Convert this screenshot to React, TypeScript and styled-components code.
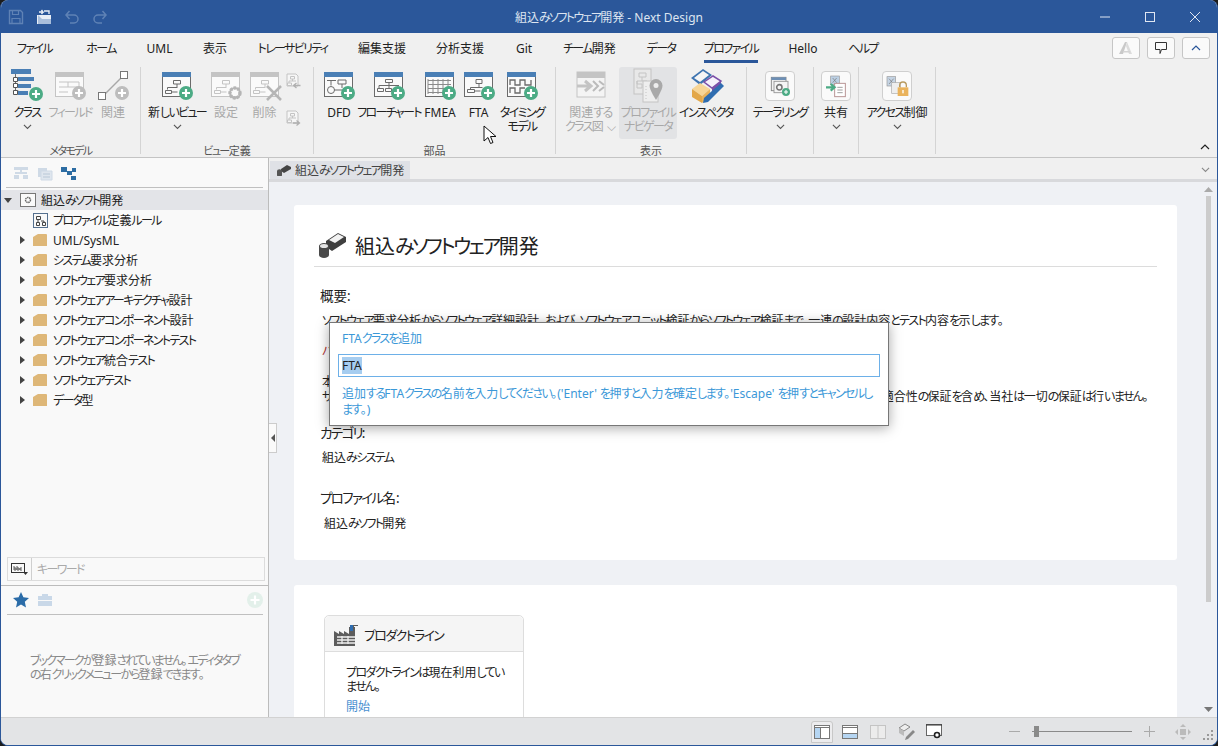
import React from "react";
import styled, { createGlobalStyle } from "styled-components";

const FONT = `"Noto Sans", "Noto Sans CJK JP", sans-serif`;
const GREEN = "#4cab85";
const OFF = "#c4c4c4";

const Global = createGlobalStyle`
  html, body { margin: 0; padding: 0; height: 100%; background: #1c1c1c; overflow: hidden; }
  #root { height: 100%; }
  * { box-sizing: border-box; }
  body { font-family: ${FONT}; font-feature-settings: "palt"; font-size: 12px; color: #222; }
`;

const TABS = [
  { title: "ファイル", width: 67 },
  { title: "ホーム", width: 66 },
  { title: "UML", width: 51 },
  { title: "表示", width: 60 },
  { title: "トレーサビリティ", width: 95 },
  { title: "編集支援", width: 84 },
  { title: "分析支援", width: 72 },
  { title: "Git", width: 56 },
  { title: "チーム開発", width: 75 },
  { title: "データ", width: 68 },
  { title: "プロファイル", width: 72, active: true },
  { title: "Hello", width: 72 },
  { title: "ヘルプ", width: 48 },
];

const FOLDERS = [
  "UML/SysML",
  "システム要求分析",
  "ソフトウェア要求分析",
  "ソフトウェアアーキテクチャ設計",
  "ソフトウェアコンポーネント設計",
  "ソフトウェアコンポーネントテスト",
  "ソフトウェア統合テスト",
  "ソフトウェアテスト",
  "データ型",
];

// the reference font has narrow kana, so kana runs get tighter tracking
const Jp = ({ children }: { children: string }) => (
  <>
    {children.split(/([\u3040-\u30ff]+)/).map((part, i) =>
      i % 2 ? <KanaRun key={i}>{part}</KanaRun> : part
    )}
  </>
);

/* ---------- icons ---------- */

const Plus = ({ off, cx = 27, cy = 26, r = 7 }: any) => (
  <g>
    <circle cx={cx} cy={cy} r={r} fill={off ? "#bdbdbd" : GREEN} />
    <path d={`M${cx - 4} ${cy}h8M${cx} ${cy - 4}v8`} stroke="#fff" strokeWidth="2.2" />
  </g>
);

const Frame = ({ off }: any) => (
  <g>
    <rect x="3.5" y="5.5" width="28" height="24" fill="#fafafa" stroke={off ? OFF : "#6b6b6b"} />
    <rect x="3" y="5" width="29" height="5" fill={off ? OFF : "#4a7fb5"} />
  </g>
);

const Ico = ({ children, size = 36 }: any) => (
  <svg width={size} height={size} viewBox="0 0 36 36" fill="none">
    {children}
  </svg>
);

const TreeLines = ({ c = "#6b6b6b" }: any) => (
  <path
    d="M14.5 13.5h7v3.5h-7zM18 17v3M8.5 20.5h10M8.5 20.5v2M6.5 23.5h6v3h-6zM12.5 25h6"
    stroke={c}
    fill="none"
  />
);

const ClassIcon = () => (
  <Ico>
    <rect x="2" y="2" width="20" height="5" fill="#4a7fb5" />
    <path d="M6.5 7v17M6.5 12h3M6.5 18h3M6.5 24h3" stroke="#6b6b6b" />
    <path d="M4.5 10.5h4v4h-4zM4.5 16.5h4v4h-4zM4.5 23.5h4v4h-4z" fill="#fff" stroke="#555" />
    <rect x="9" y="10" width="16" height="4" fill="#4a7fb5" />
    <rect x="9" y="17" width="13" height="4" fill="#4a7fb5" />
    <rect x="9" y="24" width="10" height="4" fill="#4a7fb5" />
    <Plus cx={27} cy={27} />
  </Ico>
);

const FieldIcon = () => (
  <Ico>
    <Frame off />
    <path d="M7 15h9M7 20h9M7 25h9M16 15h11v5H16z" stroke={OFF} />
    <Plus off />
  </Ico>
);

const RelationIcon = () => (
  <Ico>
    <path d="M8 29L29 8" stroke="#a8a8a8" strokeWidth="1.4" />
    <rect x="3.5" y="25.5" width="7" height="7" fill="#fff" stroke="#777" />
    <rect x="25.5" y="4.5" width="7" height="7" fill="#fff" stroke="#777" />
    <Plus off />
  </Ico>
);

const NewViewIcon = () => (
  <Ico>
    <Frame />
    <TreeLines />
    <Plus />
  </Ico>
);

const GearViewIcon = () => (
  <Ico>
    <Frame off />
    <TreeLines c={OFF} />
    <circle cx="27" cy="26" r="5" stroke="#b5b5b5" strokeWidth="3.4" strokeDasharray="2.4 1.2" />
    <circle cx="27" cy="26" r="5" stroke="#b5b5b5" strokeWidth="2" />
  </Ico>
);

const DeleteViewIcon = () => (
  <Ico>
    <Frame off />
    <TreeLines c={OFF} />
    <path d="M20 19l14 14M34 19L20 33" stroke="#b5b5b5" strokeWidth="2.6" />
  </Ico>
);

const SmallDiagram = ({ down }: any) => (
  <Ico size={18}>
    <path d="M6 4h18l4 4v20H6z" fill="#f6f6f6" stroke={OFF} strokeWidth="2" />
    <path d="M13 9h8v5h-8zM17 14v4M10 18h14M10 18v4M7 22h8v5H7z" stroke={OFF} strokeWidth="2" />
    <path
      d={down ? "M18 28h12M25 23l6 5-6 5" : "M33 27H20M25 22l-6 5 6 5"}
      stroke="#b0b0b0"
      strokeWidth="2.6"
    />
  </Ico>
);

const DfdIcon = () => (
  <Ico>
    <Frame />
    <path d="M6 13.5h9M10 13.5v5M17 13h8v4h-8zM21 17v4M13 23h8" stroke="#6b6b6b" />
    <circle cx="10" cy="23" r="3.5" fill="#fafafa" stroke="#6b6b6b" />
    <Plus />
  </Ico>
);

const FlowIcon = () => (
  <Ico>
    <Frame />
    <path
      d="M14.5 12.5h7v3h-7zM18 15.5v3M8 18.5h20M8 18.5v3M18 18.5v3M6.5 21.5h6v3h-6zM14.5 21.5h6v3h-6z"
      stroke="#6b6b6b"
    />
    <Plus />
  </Ico>
);

const FmeaIcon = () => (
  <Ico>
    <Frame />
    <path
      d="M6 13.5h23M6 17.5h23M6 21.5h23M6 25.5h19M6 12v15M11 12v15M16 12v15M21 12v15M26 12v8"
      stroke="#8a8a8a"
    />
    <Plus />
  </Ico>
);

const FtaIcon = () => (
  <Ico>
    <Frame />
    <path
      d="M15 12.5h6v4h-6zM18 16.5v4M9.5 20.5h12M9.5 20.5v2M6.5 22.5h7v3h-7zM13.5 24h6"
      stroke="#6b6b6b"
    />
    <Plus />
  </Ico>
);

const TimingIcon = () => (
  <Ico>
    <Frame />
    <path
      d="M6 18v-5h5v5h5v-5h5v5h6v-5M6 26v-5h5v5h5v-5h5"
      stroke="#6b6b6b"
      strokeWidth="1.3"
    />
    <Plus />
  </Ico>
);

const RelatedDiagramIcon = () => (
  <Ico>
    <rect x="4" y="5" width="28" height="25" fill="#f4f4f4" stroke={OFF} />
    <rect x="4" y="5" width="28" height="6" fill={OFF} />
    <path d="M4 19h12M12 14l6 5-6 5" stroke={OFF} strokeWidth="3" />
    <path d="M20 14l5 5-5 5M26 14l5 4M26 24l5-4" stroke="#bbb" strokeWidth="2" />
  </Ico>
);

const NavigatorIcon = () => (
  <Ico>
    <rect x="4" y="2" width="17" height="25" fill="#e8e8e8" stroke={OFF} />
    <path d="M9 6h7v4H9zM12 10v4M7 14h10M7 14v3h5v4H7z" stroke={OFF} />
    <rect x="13" y="14" width="15" height="21" fill="#eee" stroke={OFF} />
    <path d="M16 19v14" stroke={OFF} strokeDasharray="1 2" />
    <path d="M26 12a6.5 6.5 0 0 1 6.5 6.5C32.5 23 26 33 26 33s-6.5-10-6.5-14.5A6.5 6.5 0 0 1 26 12z" fill="#a9a9a9" />
    <circle cx="26" cy="18.5" r="2.5" fill="#eee" />
  </Ico>
);

const InspectorIcon = () => (
  <svg width="36" height="36" viewBox="0 0 36 36">
    <path d="M3 11L15 2l9 6-12 10z" fill="#3e74b0" />
    <path d="M6 11l9-7 6 4-9 7z" fill="#f5f5f5" />
    <path d="M16 15l9-6 8 5-9 7z" fill="#f5f1fb" stroke="#7a4fa8" strokeWidth="1.5" />
    <path d="M24 21l9-7v7l-9 6z" fill="#7a4fa8" />
    <path d="M4 22l8-6 10 6-8 7z" fill="#f7d596" />
    <path d="M4 22v8l10 6v-7z" fill="#e3a748" />
    <path d="M14 29l8-7v8l-8 6z" fill="#eab35c" />
    <path d="M33 16l3 3-16 16-5 1 1-5z" fill="#2f6db0" />
  </svg>
);

const TailorIcon = () => (
  <Ico size={24}>
    <rect x="5" y="5" width="22" height="20" fill="#f2f2f2" stroke="#888" strokeWidth="1.4" />
    <rect x="5" y="5" width="22" height="4" fill="#6d8fb5" />
    <rect x="9" y="11" width="21" height="17" fill="#f5f5f5" stroke="#999" strokeWidth="1.4" />
    <circle cx="17" cy="20" r="4" stroke="#777" strokeWidth="2.4" />
    <circle cx="27" cy="27" r="6" fill={GREEN} />
    <path d="M24 27h6M27 24v6" stroke="#fff" strokeWidth="1.6" />
  </Ico>
);

const ShareIcon = () => (
  <Ico size={24}>
    <rect x="10" y="3" width="13" height="13" fill="#bcd0e4" stroke="#999" />
    <path d="M13 6l6 7M19 6l-6 7" stroke="#777" />
    <rect x="16" y="14" width="16" height="20" fill="#fff" stroke="#b58f8f" strokeWidth="1.4" />
    <path d="M20 20h8M20 24h8M20 28h8" stroke="#999" strokeWidth="1.4" />
    <path d="M3 20h11M10 15l6 5-6 5" stroke={GREEN} strokeWidth="3.2" fill="none" />
  </Ico>
);

const AccessIcon = () => (
  <Ico size={24}>
    <rect x="3" y="4" width="13" height="14" fill="#c5d4e4" stroke="#999" />
    <path d="M6 7l7 8M13 7l-7 8" stroke="#777" />
    <rect x="10" y="13" width="13" height="16" fill="#eee" stroke="#aaa" />
    <path d="M22 20v-3a5 5 0 0 1 10 0v3" stroke="#b99a5f" strokeWidth="2" fill="none" />
    <rect x="19" y="20" width="16" height="13" fill="#eab35c" />
    <rect x="26" y="24" width="2" height="5" fill="#fff" />
  </Ico>
);

const Chevron = ({ c = "#555", size = 9 }: any) => (
  <svg width={size} height={size * 0.6} viewBox="0 0 10 6" fill="none">
    <path d="M1 1l4 4 4-4" stroke={c} strokeWidth="1.2" />
  </svg>
);

/* ---------- ribbon data ---------- */

const GROUPS: any[] = [
  {
    label: "メタモデル",
    width: 140,
    pad: 5,
    items: [
      { w: 42, icon: <ClassIcon />, label: "クラス", more: true },
      { w: 44, icon: <FieldIcon />, label: "フィールド", off: true },
      { w: 42, icon: <RelationIcon />, label: "関連", off: true },
    ],
  },
  {
    label: "ビュー定義",
    width: 173,
    pad: 7,
    items: [
      { w: 58, icon: <NewViewIcon />, label: "新しいビュー", more: true },
      { w: 40, icon: <GearViewIcon />, label: "設定", off: true },
      { w: 37, icon: <DeleteViewIcon />, label: "削除", off: true },
    ],
    small: true,
  },
  {
    label: "部品",
    width: 242,
    pad: 5,
    items: [
      { w: 40, icon: <DfdIcon />, label: "DFD" },
      { w: 60, icon: <FlowIcon />, label: "フローチャート" },
      { w: 42, icon: <FmeaIcon />, label: "FMEA" },
      { w: 35, icon: <FtaIcon />, label: "FTA" },
      { w: 52, icon: <TimingIcon />, label: "タイミング\nモデル" },
    ],
  },
  {
    label: "表示",
    width: 191,
    pad: 6,
    items: [
      { w: 57, icon: <RelatedDiagramIcon />, label: "関連する\nクラス図 ⌵", off: true },
      { w: 58, icon: <NavigatorIcon />, label: "プロファイル\nナビゲータ", off: true, pressed: true },
      { w: 58, icon: <InspectorIcon />, label: "インスペクタ" },
    ],
  },
  { width: 67, pad: 0, items: [{ w: 67, icon: <TailorIcon />, label: "テーラリング", more: true, boxed: true }] },
  { width: 45, pad: 0, items: [{ w: 45, icon: <ShareIcon />, label: "共有", more: true, boxed: true }] },
  { width: 77, pad: 0, items: [{ w: 77, icon: <AccessIcon />, label: "アクセス制御", more: true, boxed: true }] },
];

/* ---------- app ---------- */

export default function App() {
  return (
    <>
      <Global />
      <Win>
        <TitleBar>
          <QuickAccess>
            <QuickSlot>
              <svg width="16" height="16" viewBox="0 0 16 16" fill="none">
                <path d="M1.5 1.5h11l2 2v11h-13z" stroke="#5f82b5" strokeWidth="1.4" />
                <path d="M4.5 1.5v4h6v-4M4 14.5v-5h8v5" stroke="#5f82b5" strokeWidth="1.2" />
              </svg>
            </QuickSlot>
            <QuickSlot>
              <svg width="16" height="16" viewBox="0 0 16 16">
                <path d="M1 6h14v9H1z" fill="#e9eef6" />
                <path d="M2 6l4 4h9v5H2z" fill="#a9bedb" />
                <path d="M3 3h4l-1.5-2M7 3L5.5 5M8 2h5v3" stroke="#e9eef6" strokeWidth="1.4" fill="none" />
              </svg>
            </QuickSlot>
            <QuickSlot>
              <svg width="16" height="16" viewBox="0 0 16 16" fill="none">
                <path d="M2 6h8a4 4 0 0 1 0 8H6M5.5 2L2 6l3.5 4" stroke="#5f82b5" strokeWidth="1.5" />
              </svg>
            </QuickSlot>
            <QuickSlot>
              <svg width="16" height="16" viewBox="0 0 16 16" fill="none">
                <path d="M14 6H6a4 4 0 0 0 0 8h4M10.5 2L14 6l-3.5 4" stroke="#5f82b5" strokeWidth="1.5" />
              </svg>
            </QuickSlot>
          </QuickAccess>
          <WinTitle>
            <Jp>組込みソフトウェア開発 - Next Design</Jp>
          </WinTitle>
          <WinControls>
            <WinButton>
              <svg width="12" height="12" viewBox="0 0 12 12"><path d="M1 6h10" stroke="#dfe6f2" /></svg>
            </WinButton>
            <WinButton>
              <svg width="12" height="12" viewBox="0 0 12 12"><rect x="1.5" y="1.5" width="9" height="9" fill="none" stroke="#dfe6f2" /></svg>
            </WinButton>
            <WinButton>
              <svg width="12" height="12" viewBox="0 0 12 12"><path d="M1 1l10 10M11 1L1 11" stroke="#dfe6f2" /></svg>
            </WinButton>
          </WinControls>
        </TitleBar>

        <TabRow>
          <TabList>
            {TABS.map((t) => (
              <Tab key={t.title} $width={t.width}>
                <TabText $active={t.active}>
                  <Jp>{t.title}</Jp>
                </TabText>
              </Tab>
            ))}
          </TabList>
          <TopButtons>
            <TopButton>
              <svg width="16" height="14" viewBox="0 0 16 14">
                <path d="M1 13L7 1h2L5 13z" fill="#c9c9c9" />
                <path d="M9 1l5 12h-3L8 5z" fill="#dcdcdc" />
                <path d="M5 10h7v1.5H5z" fill="#d4d4d4" />
              </svg>
            </TopButton>
            <TopButton>
              <svg width="14" height="14" viewBox="0 0 14 14" fill="none">
                <path d="M1.5 1.5h11v7h-5l-1.5 4v-4h-4.5z" stroke="#333" />
              </svg>
            </TopButton>
            <TopButton>
              <svg width="10" height="6" viewBox="0 0 10 6" fill="none"><path d="M1 5l4-4 4 4" stroke="#2b579a" strokeWidth="1.2" /></svg>
            </TopButton>
          </TopButtons>
        </TabRow>

        <Ribbon>
          {GROUPS.map((g, i) => (
            <Group key={i} $width={g.width}>
              <GroupItems $pad={g.pad} $center={g.items[0].boxed}>
                {g.items.map((it: any) => (
                  <RibbonButton key={it.label} $width={it.w} $pressed={it.pressed} $off={it.off}>
                    {it.boxed ? (
                      <BoxedIcon>{it.icon}</BoxedIcon>
                    ) : (
                      <IconSlot>{it.icon}</IconSlot>
                    )}
                    <RibbonLabel>
                      <Jp>{it.label}</Jp>
                    </RibbonLabel>
                    {it.more && (
                      <MoreMark>
                        <Chevron />
                      </MoreMark>
                    )}
                  </RibbonButton>
                ))}
                {g.small && (
                  <SmallColumn>
                    <SmallDiagram />
                    <SmallDiagram down />
                  </SmallColumn>
                )}
              </GroupItems>
              {g.label && (
                <GroupLabel>
                  <Jp>{g.label}</Jp>
                </GroupLabel>
              )}
            </Group>
          ))}
          <CollapseRibbon>
            <svg width="10" height="6" viewBox="0 0 10 6" fill="none"><path d="M1 5l4-4 4 4" stroke="#222" strokeWidth="1.2" /></svg>
          </CollapseRibbon>
        </Ribbon>

        <Workspace>
          <Sidebar>
            <SideToolbar>
              <svg width="16" height="14" viewBox="0 0 16 14" fill="#cfdae6">
                <path d="M1 1h14v3H1zM7 4h2v3H7zM2 6h12v2H2zM1 9h5v4H1zM10 9h5v4h-5z" />
              </svg>
              <svg width="16" height="16" viewBox="0 0 16 16">
                <path d="M1 3h9v9H1z" fill="#cfdae6" />
                <path d="M4 6h11v9H4z" fill="#dfe6ee" stroke="#cfdae6" />
                <path d="M6 9h7M6 12h7" stroke="#b8c7d6" />
              </svg>
              <svg width="16" height="16" viewBox="0 0 16 16" fill="#2d6da3">
                <rect x="0" y="2" width="6" height="5" />
                <rect x="6" y="6" width="5" height="4" />
                <rect x="11" y="3" width="4" height="4" />
                <rect x="10" y="11" width="5" height="4" />
              </svg>
            </SideToolbar>
            <Tree>
              <TreeRow $root $selected>
                <Arrow>
                  <svg width="8" height="5" viewBox="0 0 8 5"><path d="M0 0h8L4 5z" fill="#444" /></svg>
                </Arrow>
                <TreeIcon $root>
                  <svg width="16" height="14" viewBox="0 0 16 14" fill="none">
                    <rect x="0.5" y="0.5" width="15" height="13" fill="#fafafa" stroke="#777" />
                    <circle cx="8" cy="7" r="2.5" stroke="#666" strokeWidth="1.4" strokeDasharray="1.5 .6" />
                  </svg>
                </TreeIcon>
                <Jp>組込みソフト開発</Jp>
              </TreeRow>
              <TreeRow>
                <Arrow />
                <TreeIcon>
                  <svg width="15" height="15" viewBox="0 0 15 15" fill="none">
                    <rect x="0.5" y="0.5" width="14" height="14" stroke="#55708f" />
                    <path d="M3.5 3.5h4v3h-4zM3.5 9.5h3v3h-3zM9.5 9.5h3v3h-3zM5 6.5v3M8 8h3v1.5" stroke="#444" />
                  </svg>
                </TreeIcon>
                <Jp>プロファイル定義ルール</Jp>
              </TreeRow>
              {FOLDERS.map((f) => (
                <TreeRow key={f}>
                  <Arrow>
                    <svg width="5" height="8" viewBox="0 0 5 8"><path d="M0 0v8l5-4z" fill="#444" /></svg>
                  </Arrow>
                  <TreeIcon>
                    <svg width="14" height="12" viewBox="0 0 14 12">
                      <path d="M0 3l5-3h8a1 1 0 0 1 1 1v11H0z" fill="#deb778" />
                    </svg>
                  </TreeIcon>
                  <Jp>{f}</Jp>
                </TreeRow>
              ))}
            </Tree>
            <SearchBox>
              <SearchIcon>
                <svg width="17" height="12" viewBox="0 0 17 12" fill="none">
                  <rect x="0.5" y="0.5" width="13" height="9" stroke="#333" />
                  <path d="M3 3v4h2V5H3M6 3v4h2V5H6M11 5H9v2h2" stroke="#333" strokeWidth=".8" />
                  <path d="M12 9h5l-2.5 3z" fill="#333" />
                </svg>
              </SearchIcon>
              <SearchHint>
                <Jp>キーワード</Jp>
              </SearchHint>
            </SearchBox>
            <BookmarkPane>
              <BookmarkBar>
                <svg width="16" height="16" viewBox="0 0 16 16">
                  <path d="M8 0l2.4 5.3 5.6.6-4.2 3.8 1.2 5.8L8 12.6 3 15.5l1.2-5.8L0 5.9l5.6-.6z" fill="#2b6ca8" />
                </svg>
                <svg width="14" height="14" viewBox="0 0 14 14">
                  <path d="M4 3V1h6v2h4v4H0V3zM0 8h14v5H0z" fill="#c9d8e8" />
                </svg>
                <BookmarkAdd>
                  <svg width="16" height="16" viewBox="0 0 16 16">
                    <circle cx="8" cy="8" r="8" fill="#e3f0ea" />
                    <path d="M3.5 8h9M8 3.5v9" stroke="#fff" strokeWidth="2.2" />
                  </svg>
                </BookmarkAdd>
              </BookmarkBar>
              <BookmarkMessage>
                <Jp>ブックマークが登録されていません。エディタタブ</Jp>
                <br />
                <Jp>の右クリックメニューから登録できます。</Jp>
              </BookmarkMessage>
            </BookmarkPane>
          </Sidebar>

          <Main>
            <CollapseHandle>
              <svg width="4" height="8" viewBox="0 0 4 8"><path d="M4 0v8L0 4z" fill="#555" /></svg>
            </CollapseHandle>
            <DocTabBar>
              <DocTab>
                <svg width="14" height="12" viewBox="0 0 14 12">
                  <path d="M4 5l6-4 4 2v2l-7 4-3-2z" fill="#444" />
                  <path d="M0 7a2 1.5 0 0 1 5 0v4a2 1.5 0 0 1-5 0z" fill="#555" />
                </svg>
                <span>
                  <Jp>組込みソフトウェア開発</Jp>
                </span>
              </DocTab>
              <DocTabMenu>
                <Chevron c="#888" />
              </DocTabMenu>
            </DocTabBar>
            <Scroller>
              <Pages>
                <Card $height={355}>
                  <TitleRow>
                    <svg width="27" height="26" viewBox="0 0 27 26">
                      <path d="M7 9l12-8 8 4v5L13 19l-6-4z" fill="#3f3f3f" />
                      <path d="M10 8l9-6 6 3-9 6z" fill="#f2f2f2" />
                      <path d="M0 14a5 3 0 0 1 10 0v9a5 3 0 0 1-10 0z" fill="#4a4a4a" />
                      <ellipse cx="5" cy="14" rx="4" ry="2" fill="#e6e6e6" />
                    </svg>
                    <h1>
                      <Jp>組込みソフトウェア開発</Jp>
                    </h1>
                  </TitleRow>
                  <FieldName>概要:</FieldName>
                  <FieldText $top={7}>
                    <Jp>ソフトウェア要求分析からソフトウェア詳細設計、および、ソフトウェアユニット検証からソフトウェア検証まで、一連の設計内容とテスト内容を示します。</Jp>
                  </FieldText>
                  <Warning>
                    <Jp>バージョン</Jp>
                  </Warning>
                  <Notice>
                    <Jp>本プロファイルはサンプルです。</Jp>
                    <br />
                    <Jp>サンプルの内容について、その正確性、完全性、妥当性、信頼性、有用性、最新性、安全性、および特定の利用目的への適合性の保証を含め、当社は一切の保証は行いません。</Jp>
                  </Notice>
                  <FieldName $top={19}>
                    <Jp>カテゴリ:</Jp>
                  </FieldName>
                  <FieldText $top={7}>
                    <Jp>組込みシステム</Jp>
                  </FieldText>
                  <FieldName $top={22}>
                    <Jp>プロファイル名:</Jp>
                  </FieldName>
                  <FieldText $top={8} $indent={2}>
                    <Jp>組込みソフト開発</Jp>
                  </FieldText>
                </Card>
                <Card $height={200} $wide>
                  <LineCard>
                    <LineHead>
                      <svg width="24" height="24" viewBox="0 0 24 24">
                        <path d="M0 24V9l5 3V9l5 3V9l5 3V5h3v-2h6v1h-4v1h1v19z" fill="#5c5c5c" />
                        <rect x="16" y="3" width="3" height="6" fill="#2f6db0" />
                        <path d="M3 15h18M3 18h18M3 21h18M8 14v8M14 14v8" stroke="#eee" strokeWidth="1.3" />
                      </svg>
                      <LineHeadText>
                        <Jp>プロダクトライン</Jp>
                      </LineHeadText>
                    </LineHead>
                    <LineBody>
                      <Jp>プロダクトラインは現在利用してい</Jp>
                      <br />
                      <Jp>ません。</Jp>
                      <StartLink>開始</StartLink>
                    </LineBody>
                  </LineCard>
                </Card>
              </Pages>
              <ScrollTrack>
                <svg width="9" height="5" viewBox="0 0 9 5"><path d="M4.5 0L9 5H0z" fill="#aaa" /></svg>
                <ScrollThumb />
                <ScrollEnd>
                  <svg width="9" height="5" viewBox="0 0 9 5"><path d="M0 0h9L4.5 5z" fill="#777" /></svg>
                </ScrollEnd>
              </ScrollTrack>
            </Scroller>
          </Main>
        </Workspace>

        <StatusBar>
          <StatusIcon $on>
            <svg width="16" height="14" viewBox="0 0 16 14">
              <rect x="0.5" y="0.5" width="15" height="13" fill="#fff" stroke="#777" />
              <rect x="1" y="3" width="5" height="10" fill="#b5d5f2" />
              <path d="M0 2.5h16M6.5 3v10" stroke="#777" />
            </svg>
          </StatusIcon>
          <StatusIcon>
            <svg width="16" height="14" viewBox="0 0 16 14">
              <rect x="0.5" y="0.5" width="15" height="13" fill="#fff" stroke="#777" />
              <rect x="1" y="9" width="14" height="4" fill="#b5d5f2" />
              <path d="M0 2.5h16M0 8.5h16" stroke="#777" />
            </svg>
          </StatusIcon>
          <StatusIcon>
            <svg width="16" height="14" viewBox="0 0 16 14" fill="none">
              <rect x="0.5" y="0.5" width="15" height="13" stroke="#c4c4c4" fill="#ececec" />
              <path d="M8 0v14" stroke="#c4c4c4" />
            </svg>
          </StatusIcon>
          <StatusIcon>
            <svg width="17" height="17" viewBox="0 0 17 17">
              <path d="M1 5l6-4 5 3-6 4z" fill="#eee" stroke="#888" />
              <path d="M1 5v5l5 3V8z" fill="#bbb" />
              <path d="M15 7l2 2-7 7-3 1 1-3z" fill="#888" />
            </svg>
          </StatusIcon>
          <StatusIcon>
            <svg width="16" height="15" viewBox="0 0 16 15">
              <rect x="0.5" y="0.5" width="15" height="11" fill="#fff" stroke="#666" />
              <path d="M0 1h16" stroke="#333" />
              <circle cx="11" cy="11" r="2.5" fill="#fff" stroke="#222" strokeWidth="1.6" />
            </svg>
          </StatusIcon>
          <ZoomGroup>
            <ZoomSign>
              <svg width="11" height="11" viewBox="0 0 11 11"><path d="M0 5.5h11" stroke="#aaa" /></svg>
            </ZoomSign>
            <Slider>
              <SliderThumb />
            </Slider>
            <ZoomSign>
              <svg width="11" height="11" viewBox="0 0 11 11"><path d="M0 5.5h11M5.5 0v11" stroke="#aaa" /></svg>
            </ZoomSign>
            <FitIcon>
              <svg width="16" height="16" viewBox="0 0 16 16" fill="#bbb">
                <path d="M8 0l3 3H5zM8 16l-3-3h6zM0 8l3-3v6zM16 8l-3 3V5z" />
                <rect x="5" y="5" width="6" height="6" />
              </svg>
            </FitIcon>
            <Grip>
              <svg width="10" height="10" viewBox="0 0 10 10" fill="#999">
                <rect x="8" y="0" width="2" height="2" />
                <rect x="4" y="4" width="2" height="2" />
                <rect x="8" y="4" width="2" height="2" />
                <rect x="0" y="8" width="2" height="2" />
                <rect x="4" y="8" width="2" height="2" />
                <rect x="8" y="8" width="2" height="2" />
              </svg>
            </Grip>
          </ZoomGroup>
        </StatusBar>

        <InputDialog>
          <DialogTitle>
            <Jp>FTAクラスを追加</Jp>
          </DialogTitle>
          <DialogInput>
            <Selected>FTA</Selected>
          </DialogInput>
          <DialogHelp>
            <Jp>追加するFTAクラスの名前を入力してください。('Enter' を押すと入力を確定します。'Escape' を押すとキャンセルし</Jp>
            <br />
            <Jp>ます。)</Jp>
          </DialogHelp>
        </InputDialog>

        <Pointer>
          <svg width="14" height="20" viewBox="0 0 14 20">
            <path d="M1 1v15l4-3.5 2.5 6 2.5-1-2.5-6H13z" fill="#fff" stroke="#111" />
          </svg>
        </Pointer>
      </Win>
    </>
  );
}

/* ---------- styles ---------- */

const KanaRun = styled.span`
  letter-spacing: -1.65px;
`;

const Win = styled.div`
  position: relative;
  width: 1218px;
  height: 746px;
  display: flex;
  flex-direction: column;
  background: #f0f0f0;
  border: 1px solid #2b579a;
  border-top: none;
  border-radius: 8px;
  overflow: hidden;
`;

const TitleBar = styled.div`
  position: relative;
  height: 33px;
  flex: none;
  margin: 0 -1px;
  background: #2b579a;
  display: flex;
  align-items: center;
  justify-content: space-between;
`;

const QuickAccess = styled.div`
  display: flex;
  padding-left: 2px;
`;

const QuickSlot = styled.div`
  width: 28px;
  height: 33px;
  display: flex;
  align-items: center;
  justify-content: center;
`;

const WinTitle = styled.div`
  position: absolute;
  left: 0;
  right: 0;
  text-align: center;
  color: #dde5f1;
  font-size: 12px;
`;

const WinControls = styled.div`
  display: flex;
  padding-right: 1px;
`;

const WinButton = styled.div`
  width: 45px;
  height: 33px;
  display: flex;
  align-items: center;
  justify-content: center;
`;

const TabRow = styled.div`
  height: 30px;
  flex: none;
  display: flex;
  justify-content: space-between;
`;

const TabList = styled.div`
  display: flex;
`;

const Tab = styled.div<{ $width: number }>`
  width: ${(p) => p.$width}px;
  display: flex;
  justify-content: center;
  white-space: nowrap;
`;

const TabText = styled.span<{ $active?: boolean }>`
  display: flex;
  align-items: center;
  height: 30px;
  color: #222;
  border-bottom: 3px solid ${(p) => (p.$active ? "#2b579a" : "transparent")};
  padding-top: 3px;
`;

const TopButtons = styled.div`
  display: flex;
  gap: 7px;
  padding: 4px 7px 0 0;
`;

const TopButton = styled.div`
  width: 28px;
  height: 22px;
  background: #fafafa;
  border: 1px solid #c6c6c6;
  border-radius: 3px;
  display: flex;
  align-items: center;
  justify-content: center;
`;

const Ribbon = styled.div`
  position: relative;
  height: 95px;
  flex: none;
  display: flex;
  padding: 4px 0 3px 0;
  border-bottom: 1px solid #c4c4c4;
`;

const Group = styled.div<{ $width: number }>`
  position: relative;
  width: ${(p) => p.$width}px;
  flex: none;
  border-right: 1px solid #d4d4d4;
`;

const GroupItems = styled.div<{ $pad: number; $center?: boolean }>`
  display: flex;
  padding-left: ${(p) => p.$pad}px;
  justify-content: ${(p) => (p.$center ? "center" : "flex-start")};
`;

const RibbonButton = styled.div<{ $width: number; $pressed?: boolean; $off?: boolean }>`
  width: ${(p) => p.$width}px;
  height: 72px;
  flex: none;
  display: flex;
  flex-direction: column;
  align-items: center;
  background: ${(p) => (p.$pressed ? "#e2e3e5" : "transparent")};
  border-radius: 3px;
  color: ${(p) => (p.$off ? "#a8a8a8" : "#222")};
`;

const IconSlot = styled.div`
  height: 36px;
  flex: none;
`;

const BoxedIcon = styled.div`
  width: 30px;
  height: 30px;
  margin: 4px 0 2px;
  flex: none;
  background: #fafafa;
  border: 1px solid #cfcfcf;
  border-radius: 4px;
  display: flex;
  align-items: center;
  justify-content: center;
`;

const RibbonLabel = styled.div`
  margin-top: 3px;
  text-align: center;
  line-height: 14px;
  white-space: pre;
`;

const MoreMark = styled.div`
  height: 14px;
  display: flex;
  align-items: center;
`;

const SmallColumn = styled.div`
  width: 20px;
  display: flex;
  flex-direction: column;
  align-items: center;
  gap: 19px;
  padding-top: 5px;
`;

const GroupLabel = styled.div`
  position: absolute;
  left: 0;
  right: 0;
  bottom: -4px;
  text-align: center;
  color: #555;
  font-size: 11px;
  line-height: 15px;
`;

const CollapseRibbon = styled.div`
  position: absolute;
  right: 7px;
  bottom: 3px;
`;

const Workspace = styled.div`
  flex: 1;
  min-height: 0;
  display: flex;
`;

const Sidebar = styled.aside`
  width: 268px;
  flex: none;
  display: flex;
  flex-direction: column;
  background: #f9f9f9;
  border-right: 1px solid #bcbcbc;
`;

const SideToolbar = styled.div`
  height: 30px;
  flex: none;
  margin: 0 5px 0 5px;
  display: flex;
  align-items: center;
  gap: 8px;
  padding-left: 7px;
  border-bottom: 1px solid #c0c0c0;
`;

const Tree = styled.div`
  flex: 1;
  padding-top: 2px;
`;

const TreeRow = styled.div<{ $root?: boolean; $selected?: boolean }>`
  height: 20px;
  display: flex;
  align-items: center;
  padding-left: ${(p) => (p.$root ? 1 : 15)}px;
  background: ${(p) => (p.$selected ? "#e3e4e8" : "transparent")};
  white-space: nowrap;
`;

const Arrow = styled.div`
  width: 12px;
  display: flex;
  justify-content: center;
  flex: none;
`;

const TreeIcon = styled.div<{ $root?: boolean }>`
  width: 16px;
  margin: ${(p) => (p.$root ? "0 5px 0 6px" : "0 4px 0 5px")};
  display: flex;
  align-items: center;
  flex: none;
`;

const SearchBox = styled.div`
  height: 24px;
  flex: none;
  margin: 0 3px 4px 6px;
  display: flex;
  align-items: center;
  border: 1px solid #dcdcdc;
`;

const SearchIcon = styled.div`
  width: 24px;
  height: 22px;
  display: flex;
  align-items: center;
  justify-content: center;
  border-right: 1px solid #cfcfcf;
`;

const SearchHint = styled.div`
  padding-left: 5px;
  color: #aaa;
`;

const BookmarkPane = styled.div`
  height: 132px;
  flex: none;
  border-top: 1px solid #bcbcbc;
`;

const BookmarkBar = styled.div`
  height: 29px;
  margin: 0 5px 0 6px;
  display: flex;
  align-items: center;
  gap: 9px;
  padding: 0 0 0 6px;
  border-bottom: 1px solid #c0c0c0;
`;

const BookmarkAdd = styled.div`
  margin-left: auto;
  display: flex;
`;

const BookmarkMessage = styled.p`
  margin: 39px 0 0 29px;
  color: #888;
  line-height: 14px;
  white-space: nowrap;
  ${KanaRun} {
    letter-spacing: -1.9px;
  }
`;

const Main = styled.main`
  position: relative;
  flex: 1;
  min-width: 0;
  display: flex;
  flex-direction: column;
  background: #eff1f5;
`;

const CollapseHandle = styled.div`
  position: absolute;
  left: 0;
  top: 265px;
  width: 8px;
  height: 30px;
  background: #fafafa;
  border: 1px solid #ccc;
  border-left: none;
  display: flex;
  align-items: center;
  justify-content: center;
`;

const DocTabBar = styled.div`
  height: 24px;
  flex: none;
  display: flex;
  align-items: flex-end;
  justify-content: space-between;
  background: #f0f0f0;
  border-bottom: 3px solid #d8d9dc;
  padding-left: 1px;
`;

const DocTab = styled.div`
  width: 140px;
  height: 18px;
  display: flex;
  align-items: center;
  gap: 4px;
  padding-left: 7px;
  background: #dfe1e6;
  color: #444;
  white-space: nowrap;
`;

const DocTabMenu = styled.div`
  height: 18px;
  padding-right: 7px;
  display: flex;
  align-items: center;
`;

const Scroller = styled.div`
  flex: 1;
  min-height: 0;
  display: flex;
  overflow: hidden;
`;

const Pages = styled.div`
  flex: 1;
  min-width: 0;
  padding: 23px 23px 0 25px;
  display: flex;
  flex-direction: column;
  gap: 25px;
`;

const Card = styled.section<{ $height: number; $wide?: boolean }>`
  height: ${(p) => p.$height}px;
  flex: none;
  background: #fff;
  border-radius: 3px;
  padding: ${(p) => (p.$wide ? "30px 30px 0" : "0 20px 0 20px")};
`;

const TitleRow = styled.div`
  height: 62px;
  display: flex;
  align-items: flex-end;
  gap: 9px;
  padding: 0 0 5px 5px;
  border-bottom: 1px solid #dcdcdc;
  svg {
    margin-bottom: 3px;
  }
  h1 {
    margin: 0;
    font-size: 20px;
    font-weight: 400;
    line-height: 28px;
    color: #222;
  }
  ${KanaRun} {
    letter-spacing: -2.5px;
  }
`;

const FieldName = styled.div<{ $top?: number }>`
  margin-top: ${(p) => p.$top ?? 19}px;
  margin-left: 6px;
  font-size: 13.5px;
  line-height: 20px;
`;

const FieldText = styled.div<{ $top?: number; $indent?: number }>`
  margin-top: ${(p) => p.$top ?? 5}px;
  margin-left: ${(p) => 8 + (p.$indent ?? 0)}px;
  line-height: 16px;
  white-space: nowrap;
`;

const Warning = styled.div`
  margin: 14px 0 0 8px;
  color: #b03030;
  line-height: 16px;
`;

const Notice = styled.div`
  margin: 15px 0 0 8px;
  line-height: 15px;
  white-space: nowrap;
`;

const LineCard = styled.div`
  width: 200px;
  height: 170px;
  background: #fff;
  border: 1px solid #ddd;
  border-radius: 5px;
`;

const LineHead = styled.div`
  height: 36px;
  display: flex;
  align-items: center;
  gap: 6px;
  padding-left: 9px;
  background: #f5f5f5;
  border-bottom: 1px solid #ddd;
  border-radius: 5px 5px 0 0;
`;

const LineHeadText = styled.span`
  padding-top: 2px;
  font-size: 13px;
`;

const LineBody = styled.div`
  padding: 14px 0 0 21px;
  line-height: 14px;
  white-space: nowrap;
`;

const StartLink = styled.a`
  display: block;
  margin-top: 6px;
  color: #4a90d0;
`;

const ScrollTrack = styled.div`
  width: 17px;
  flex: none;
  margin-right: 0;
  display: flex;
  flex-direction: column;
  align-items: center;
  padding-top: 5px;
`;

const ScrollThumb = styled.div`
  width: 5px;
  height: 406px;
  margin-top: 4px;
  background: #cccccc;
`;

const ScrollEnd = styled.div`
  margin-top: auto;
  padding-bottom: 5px;
  display: flex;
`;

const StatusBar = styled.footer`
  height: 28px;
  flex: none;
  display: flex;
  align-items: center;
  padding-left: 810px;
  background: #e3e4e6;
  border-top: 1px solid #d2d2d2;
`;

const StatusIcon = styled.div<{ $on?: boolean }>`
  width: 22px;
  height: 22px;
  margin-right: 6px;
  display: flex;
  align-items: center;
  justify-content: center;
  border: 1px solid ${(p) => (p.$on ? "#c8c8c8" : "transparent")};
  border-radius: 3px 3px 0 0;
  background: ${(p) => (p.$on ? "#ececee" : "transparent")};
`;

const ZoomGroup = styled.div`
  margin-left: auto;
  display: flex;
  align-items: center;
  padding-right: 4px;
`;

const ZoomSign = styled.div`
  display: flex;
  margin: 0 12px;
`;

const Slider = styled.div`
  position: relative;
  width: 100px;
  height: 1px;
  background: #8a8a8a;
`;

const SliderThumb = styled.div`
  position: absolute;
  left: 2px;
  top: -5px;
  width: 5px;
  height: 11px;
  background: #8a8a8a;
`;

const FitIcon = styled.div`
  display: flex;
  margin: 0 12px 0 8px;
`;

const Grip = styled.div`
  display: flex;
  align-self: flex-end;
`;

const InputDialog = styled.div`
  position: absolute;
  left: 328px;
  top: 322px;
  width: 560px;
  height: 104px;
  background: #fff;
  border: 1px solid #777;
  box-shadow: 0 2px 12px rgba(0, 0, 0, 0.35);
  padding: 8px 8px 0 8px;
`;

const DialogTitle = styled.div`
  padding-left: 4px;
  color: #3b98d8;
  line-height: 16px;
`;

const DialogInput = styled.div`
  height: 23px;
  margin-top: 7px;
  display: flex;
  align-items: center;
  padding-left: 3px;
  border: 1px solid #6db0e8;
  font-size: 12px;
`;

const Selected = styled.span`
  background: #a6cdf0;
  line-height: 17px;
`;

const DialogHelp = styled.div`
  margin-top: 9px;
  padding-left: 4px;
  color: #3b98d8;
  line-height: 16px;
  white-space: nowrap;
`;

const Pointer = styled.div`
  position: absolute;
  left: 482px;
  top: 125px;
  display: flex;
`;
